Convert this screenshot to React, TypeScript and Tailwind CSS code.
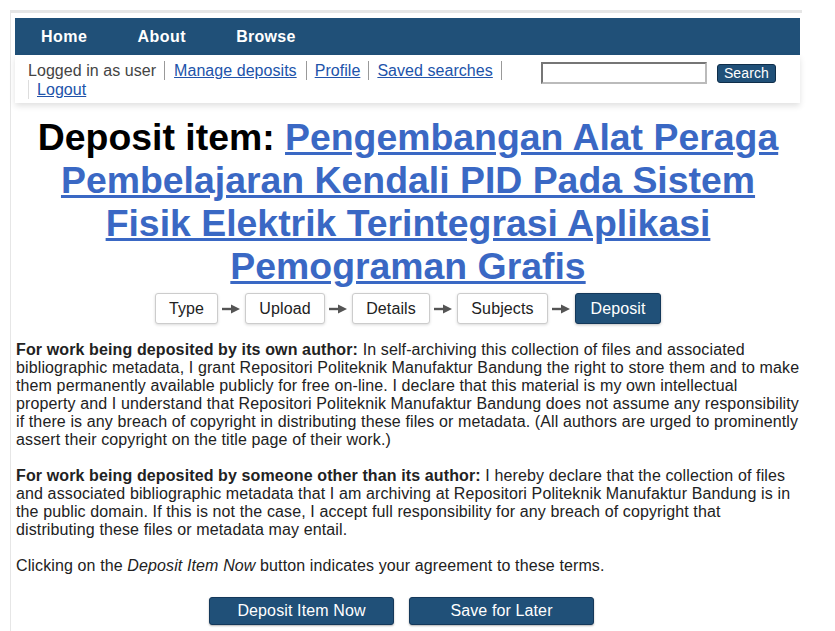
import React from "react";

const steps = [
  { label: "Type", w: "w-[63px]" },
  { label: "Upload", w: "w-[80px]" },
  { label: "Details", w: "w-[78px]" },
  { label: "Subjects", w: "w-[91px]" },
  { label: "Deposit", w: "w-[86px]" },
];

function Arrow() {
  return (
    <svg width="20" height="10" viewBox="0 0 20 10" className="ml-[3px] mr-[4px]">
      <line x1="1" y1="5" x2="12" y2="5" stroke="#555" strokeWidth="2.4" />
      <polygon points="10,0.5 19,5 10,9.5" fill="#555" />
    </svg>
  );
}

export default function App() {
  return (
    <div className="min-h-screen bg-white font-['Liberation_Sans',Arial,sans-serif] text-[16px] text-[#222] tracking-[0.12px]">
      <div className="ml-[10px] mt-[10px] w-[792px] border-l border-t-[3px] border-[#e6e6e6] pl-[5px] pr-[2px] pt-[5px] pb-[10px]">
        {/* top menu */}
        <div className="-ml-[1px]">
          <nav className="flex h-[37px] items-center bg-[#205078] pl-[1px] font-bold text-white">
            <span className="px-[25px] tracking-[0.5px]">Home</span>
            <span className="px-[25px] tracking-[0.5px]">About</span>
            <span className="px-[25px] tracking-[0.3px]">Browse</span>
          </nav>
          <div className="flex h-[48px] items-start justify-between bg-white pl-[13px] pr-[24px] pt-[6px] shadow-[0_3px_6px_rgba(0,0,0,0.12)]">
            <div className="w-[505px] leading-[19px] tracking-[0.05px] text-[#444]">
              <span className="inline-block border-r border-[#999] pr-[8px]">Logged in as user</span>
              <a className="inline-block border-r border-[#999] px-[9px] text-[#2153aa] underline" href="#">
                Manage deposits
              </a>
              <a className="inline-block border-r border-[#999] px-[8px] text-[#2153aa] underline" href="#">
                Profile
              </a>
              <a className="inline-block border-r border-[#999] px-[8px] text-[#2153aa] underline" href="#">
                Saved searches
              </a>
              <a className="inline-block border-l border-[#ddd] pl-[8px] text-[#2153aa] underline" href="#">
                Logout
              </a>
            </div>
            <div className="flex items-center gap-[10px] pt-[1px]">
              <input
                type="text"
                className="h-[22px] w-[166px] border-2 border-t-[#767676] border-l-[#767676] border-r-[#bbb] border-b-[#bbb] bg-white"
              />
              <button className="h-[19px] rounded-[3px] border border-[#0f2e4a] bg-[#205078] px-[6px] text-[14px] leading-[16px] text-white">
                Search
              </button>
            </div>
          </div>
        </div>

        {/* title */}
        <h1 className="mt-[13px] whitespace-nowrap text-center text-[37.4px] font-bold leading-[43px] tracking-normal text-black">
          Deposit item:{" "}
          <a href="#" className="text-[#3a68c4] underline">
            Pengembangan Alat Peraga
            <br />
            Pembelajaran Kendali PID Pada Sistem
            <br />
            Fisik Elektrik Terintegrasi Aplikasi
            <br />
            Pemograman Grafis
          </a>
        </h1>

        {/* workflow steps */}
        <div className="mt-[5px] flex items-center justify-center">
          {steps.map((s, i) => (
            <React.Fragment key={s.label}>
              {i > 0 && <Arrow />}
              <div
                className={
                  s.label === "Deposit"
                    ? `flex h-[31px] ${s.w} items-center justify-center rounded-[3px] border border-[#14385a] bg-[#205078] text-white shadow-[0_1px_3px_rgba(0,0,0,0.25)]`
                    : `flex h-[31px] ${s.w} items-center justify-center rounded-[3px] border border-[#ccc] bg-white text-[#222] shadow-[0_1px_3px_rgba(0,0,0,0.15)]`
                }
              >
                {s.label}
              </div>
            </React.Fragment>
          ))}
        </div>

        {/* terms */}
        <div className="mt-[17px] whitespace-nowrap leading-[18px]">
          <p>
            <b>For work being deposited by its own author:</b> In self-archiving this collection of files and associated
            <br />
            bibliographic metadata, I grant Repositori Politeknik Manufaktur Bandung the right to store them and to make
            <br />
            them permanently available publicly for free on-line. I declare that this material is my own intellectual
            <br />
            property and I understand that Repositori Politeknik Manufaktur Bandung does not assume any responsibility
            <br />
            if there is any breach of copyright in distributing these files or metadata. (All authors are urged to
            prominently
            <br />
            assert their copyright on the title page of their work.)
          </p>
          <p className="mt-[18px]">
            <b>For work being deposited by someone other than its author:</b> I hereby declare that the collection of
            files
            <br />
            and associated bibliographic metadata that I am archiving at Repositori Politeknik Manufaktur Bandung is in
            <br />
            the public domain. If this is not the case, I accept full responsibility for any breach of copyright that
            <br />
            distributing these files or metadata may entail.
          </p>
          <p className="mt-[18px]">
            Clicking on the <i>Deposit Item Now</i> button indicates your agreement to these terms.
          </p>
        </div>

        <div className="mt-[22px] flex justify-center gap-[15px] pr-[13px]">
          <button className="h-[28px] w-[185px] rounded-[3px] border border-[#14385a] bg-[#205078] text-white shadow-[0_1px_2px_rgba(0,0,0,0.3)]">
            Deposit Item Now
          </button>
          <button className="h-[28px] w-[185px] rounded-[3px] border border-[#14385a] bg-[#205078] text-white shadow-[0_1px_2px_rgba(0,0,0,0.3)]">
            Save for Later
          </button>
        </div>
      </div>
    </div>
  );
}
